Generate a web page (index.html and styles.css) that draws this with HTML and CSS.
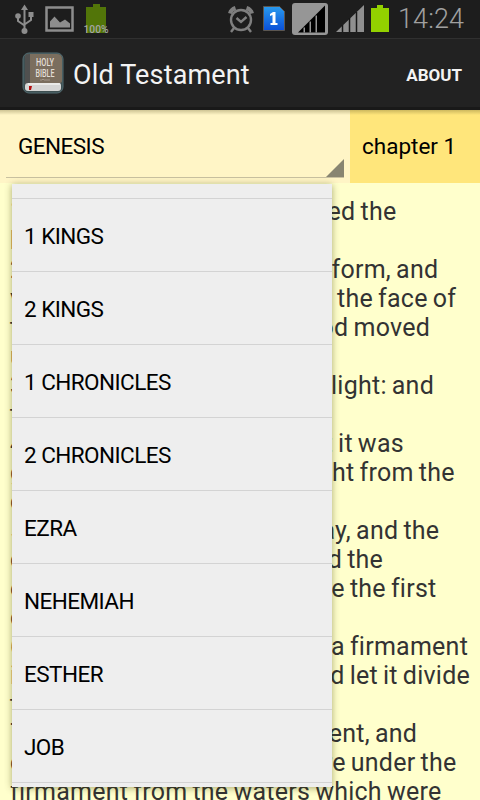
FILE: index.html
```html
<!DOCTYPE html>
<html lang="en">
<head>
  <meta charset="UTF-8">
  <meta name="viewport" content="width=device-width, initial-scale=1.0">
  <title>Old Testament</title>
  <link rel="stylesheet" href="styles.css">
</head>
<body>
  <div class="screen">
    <div class="status-bar">
      <svg class="status-icons" width="480" height="38" viewBox="0 0 480 38">
        <!-- usb -->
        <g fill="none" stroke="#8d8d8d" stroke-width="2">
          <path d="M24.500 8v22M18 17v4l6.500 4.500M31 15v5l-6.500 4.500"/>
        </g>
        <g fill="#8d8d8d">
          <path d="M24.500 4.500l3.500 5.500h-7z"/>
          <circle cx="18" cy="16" r="2.800"/>
          <rect x="28.500" y="12" width="5" height="5"/>
          <circle cx="24.500" cy="31" r="3"/>
        </g>
        <!-- picture -->
        <rect x="46.500" y="7.500" width="26" height="23" fill="none" stroke="#8d8d8d" stroke-width="2.500"/>
        <path d="M50 27.500v-6l4.500-5 5.500 6 5-3 5 4v4z" fill="#8d8d8d"/>
        <!-- battery charge -->
        <path d="M93 4h7v3h6v26h-20v-26h7z" fill="#527509"/>
        <text class="percent" x="83.500" y="33" textLength="25" lengthAdjust="spacingAndGlyphs">100%</text>
        <!-- alarm -->
        <g fill="none" stroke="#7f7f7f" stroke-width="2.400">
          <circle cx="241" cy="20" r="10"/>
          <path d="M236.500 18l4.500 4 5.500-5M234 28l-3 4M248 28l3 4"/>
          <path d="M230 13.500q1-4 5.500-5.500M252 13.500q-1-4-5.500-5.500" stroke-width="4"/>
        </g>
        <!-- sim 1 -->
        <path d="M263.500 6.500h16l5 5v19h-21z" fill="url(#sim)" stroke="#5b5650"/>
        <path d="M270 14l3-2h2.500v11h2v2h-7v-2h2v-8l-2.500 1z" fill="#fff"/>
        <!-- signal 1 -->
        <rect x="292" y="3" width="36" height="32" rx="3" fill="#969696"/>
        <path d="M325 5.500v27h-27z" fill="#000"/>
        <path d="M303.500 27.500h1.500v5h-1.500zM309.500 21.500h1.500v11h-1.500zM315.500 15.500h1.500v17h-1.500z" fill="#969696"/>
        <!-- signal 2 -->
        <path d="M336 32l28-27v27z" fill="#8f8f8f"/>
        <path d="M342.500 25v7M349.500 18v14M356.500 12v20" stroke="#171717" stroke-width="1.500"/>
        <!-- battery -->
        <path d="M377 5h6v3h6v24h-18v-24h6z" fill="#93d100"/>
        <defs>
          <linearGradient id="sim" x1="0" y1="0" x2="0" y2="1">
            <stop offset="0" stop-color="#299bee"/>
            <stop offset="1" stop-color="#0a4fd8"/>
          </linearGradient>
        </defs>
        <text class="clock" x="398" y="28" textLength="66">14:24</text>
      </svg>
    </div>

    <header class="action-bar">
      <svg class="app-icon" width="42" height="42" viewBox="0 0 42 42">
        <rect x="1" y="1" width="40" height="40" rx="6" fill="#3f5052" stroke="#526c72"/>
        <path d="M3 6q0-4 4-4h28q5 0 5 5v22q0 2-3 2h-34z" fill="#7b6e5e"/>
        <path d="M3 6q0-4 4-4h1v30h-5z" fill="#50504f"/>
        <path d="M6 31h31q2 0 2 2v3q0 3-3 3h-30q-3 0-3-3v-2q0-3 3-3z" fill="#d5d5d4"/>
        <path d="M6 32h32" stroke="#f1f1ef" stroke-width="1.500"/>
        <path d="M7 34h3l-1 4h-2z" fill="#b50e0e"/>
        <text class="cover" x="14" y="14" textLength="18" lengthAdjust="spacingAndGlyphs">HOLY</text>
        <text class="cover" x="13.500" y="24.500" textLength="19" lengthAdjust="spacingAndGlyphs">BIBLE</text>
        <path d="M18 28h2l1-1 1 1h6" fill="none" stroke="#b4aa9e" stroke-width=".7"/>
      </svg>
      <h1 class="title">Old Testament</h1>
      <span class="about">ABOUT</span>
    </header>

    <div class="selectors">
      <div class="book">
        <div class="spinner">
          <span>GENESIS</span>
          <svg class="corner" width="18" height="18" viewBox="0 0 18 18"><path d="M18 0v18h-18z" fill="#888571"/></svg>
        </div>
      </div>
      <div class="chapter">chapter 1</div>
    </div>

    <main class="verses">
      <p><span class="num">1</span> In the beginning God created the</p>
      <p>heaven and the earth.</p>
      <p><span class="num">2</span> And the earth was without form, and</p>
      <p>void; and darkness was upon the face of</p>
      <p>the deep. And the Spirit of God moved</p>
      <p>upon the face of the waters.</p>
      <p><span class="num">3</span> And God said, Let there be light: and</p>
      <p>there was light.</p>
      <p><span class="num">4</span> And God saw the light, that it was</p>
      <p>good: and God divided the light from the</p>
      <p>darkness.</p>
      <p><span class="num">5</span> And God called the light Day, and the</p>
      <p>darkness he called Night. And the</p>
      <p>evening and the morning were the first</p>
      <p>day.</p>
      <p><span class="num">6</span> And God said, Let there be a firmament</p>
      <p>in the midst of the waters, and let it divide</p>
      <p>the waters from the waters.</p>
      <p><span class="num">7</span> And God made the firmament, and</p>
      <p>divided the waters which were under the</p>
      <p>firmament from the waters which were</p>
    </main>

    <ul class="dropdown">
      <li class="partial"></li>
      <li>1 KINGS</li>
      <li>2 KINGS</li>
      <li>1 CHRONICLES</li>
      <li>2 CHRONICLES</li>
      <li>EZRA</li>
      <li>NEHEMIAH</li>
      <li>ESTHER</li>
      <li>JOB</li>
    </ul>
  </div>
</body>
</html>
```

FILE: styles.css
```css
* {
  box-sizing: border-box;
}

body {
  margin: 0;
  font-family: Roboto, "Liberation Sans", sans-serif;
}

.screen {
  position: relative;
  display: flex;
  flex-direction: column;
  width: 480px;
  height: 800px;
  overflow: hidden;
  background: #ffffcc;
}

.status-bar {
  height: 38px;
  background: #1d1d1d;
}

.status-icons {
  display: block;
}

.percent {
  font-size: 10px;
  font-weight: 500;
  fill: #a5a5a5;
}

.clock {
  font-size: 27px;
  font-weight: 300;
  fill: #a0a0a0;
}

.action-bar {
  display: flex;
  align-items: center;
  flex-shrink: 0;
  height: 72px;
  padding: 0 18px 0 22px;
  border-top: 1px solid #303030;
  border-bottom: 3px solid #191919;
  background: #222222;
  color: #f3f3f3;
}

.cover {
  font-size: 10.5px;
  font-weight: 500;
  fill: #e4ded6;
}

.title {
  margin: 0 auto 0 9px;
  padding-top: 4px;
  font-size: 27px;
  font-weight: 400;
  letter-spacing: 0.15px;
}

.about {
  padding-top: 3px;
  font-size: 17px;
  font-weight: 700;
}

.selectors {
  display: flex;
  flex-shrink: 0;
  height: 73px;
  color: #000;
  font-size: 22.5px;
  background: #fff5c6;
}

.book,
.chapter {
  background-image: linear-gradient(rgba(90, 80, 30, 0.3), transparent 5px);
}

.book {
  width: 350px;
  padding: 0 6px 5px;
  letter-spacing: -0.55px;
}

.spinner {
  display: flex;
  justify-content: space-between;
  align-items: center;
  height: 68px;
  padding: 5px 0 0 12px;
  border-bottom: 1px solid #c9c1a0;
}

.corner {
  align-self: flex-end;
}

.chapter {
  flex: 1;
  padding-left: 12px;
  line-height: 73px;
  background-color: #ffe67b;
}

.verses {
  padding: 14px 0 0 10px;
  color: #333;
  font-size: 25px;
  letter-spacing: 0.25px;
  word-spacing: -1.4px;
}

.verses p {
  margin: 0;
  line-height: 29px;
  white-space: nowrap;
}

.num {
  margin-right: 6px;
}

.dropdown {
  position: absolute;
  left: 12px;
  top: 184px;
  width: 320px;
  height: 603px;
  margin: 0;
  padding: 0;
  overflow: hidden;
  list-style: none;
  background: #eee;
  box-shadow: 0 1px 7px rgba(60, 60, 0, 0.45);
  font-size: 22.5px;
  letter-spacing: -0.55px;
  color: #000;
}

.dropdown li {
  height: 73px;
  padding: 2px 0 0 12px;
  line-height: 70px;
  border-bottom: 1px solid #d3d3d3;
}

.dropdown .partial {
  height: 15px;
}
```
